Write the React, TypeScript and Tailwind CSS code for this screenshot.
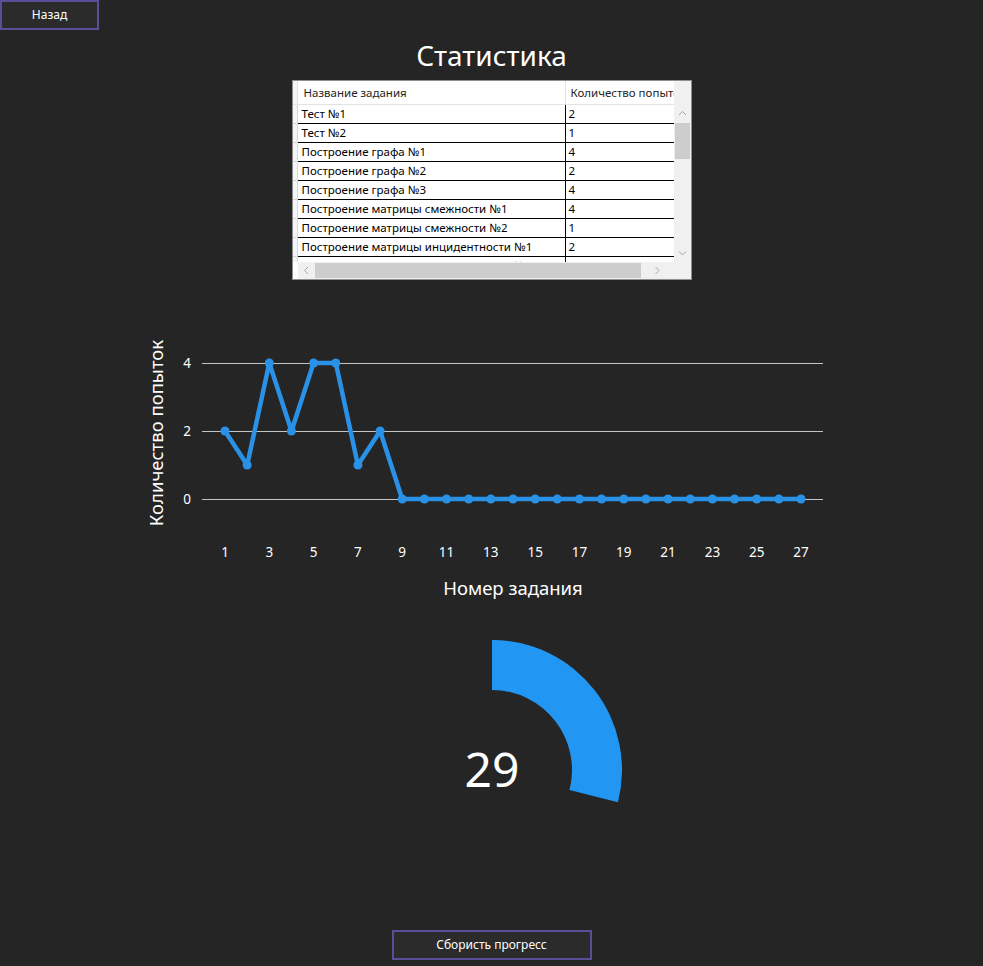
import React from "react";

const ROWS: [string, number][] = [
  ["Тест №1", 2],
  ["Тест №2", 1],
  ["Построение графа №1", 4],
  ["Построение графа №2", 2],
  ["Построение графа №3", 4],
  ["Построение матрицы смежности №1", 4],
  ["Построение матрицы смежности №2", 1],
  ["Построение матрицы инцидентности №1", 2],
  ["Построение матрицы инцидентности №2", 0],
];

const POINTS = [2, 1, 4, 2, 4, 4, 1, 2, ...Array(19).fill(0)];

const FONT = { fontFamily: '"Noto Sans", "Open Sans", sans-serif' };

function Chevron({ dir }: { dir: "up" | "down" | "left" | "right" }) {
  const d = {
    up: "M1 5 L4.5 1.5 L8 5",
    down: "M1 1.5 L4.5 5 L8 1.5",
    left: "M5 1 L1.5 4.5 L5 8",
    right: "M1.5 1 L5 4.5 L1.5 8",
  }[dir];
  const w = dir === "up" || dir === "down" ? 9 : 7;
  const h = dir === "up" || dir === "down" ? 7 : 9;
  return (
    <svg width={w} height={h} viewBox={`0 0 ${w} ${h}`}>
      <path d={d} fill="none" stroke="#a6a6a6" strokeWidth="1" />
    </svg>
  );
}

function StatsTable() {
  return (
    <div className="mt-[8px] flex h-[200px] w-[400px] flex-col border border-[#8f8f94] bg-white text-[11.5px] text-black">
      <div className="flex min-h-0 flex-1">
        <div className="flex min-w-0 flex-1 flex-col overflow-hidden">
          {/* Header */}
          <div className="flex h-[24px] shrink-0 border-b border-[#e3e3e3] bg-white">
            <div className="w-[5px] shrink-0 border-r border-[#e3e3e3] bg-[#f5f5f5]" />
            <div className="flex w-[267px] shrink-0 items-center pl-[6px] text-[11.5px] text-[#1e1e1e]">
              Название задания
            </div>
            <div className="flex flex-1 items-center overflow-hidden whitespace-nowrap border-l border-[#e3e3e3] pl-[5px] text-[11.5px] text-[#1e1e1e]">
              Количество попыток
            </div>
          </div>
          {ROWS.map(([name, n]) => (
            <div key={name} className="flex h-[19px] shrink-0">
              <div className="w-[5px] shrink-0 border-b border-r border-[#d8d8d8] bg-[#f5f5f5]" />
              <div className="flex w-[267px] shrink-0 items-center overflow-hidden whitespace-nowrap border-b border-black pl-[4px]">
                {name}
              </div>
              <div className="flex flex-1 items-center border-b border-l border-black pl-[3px]">{n}</div>
            </div>
          ))}
        </div>
        {/* Vertical scrollbar */}
        <div className="flex w-[17px] shrink-0 flex-col items-center bg-[#f0f0f0]">
          <div className="h-[24px]" />
          <div className="flex h-[17px] items-center justify-center">
            <Chevron dir="up" />
          </div>
          <div className="relative w-full flex-1">
            <div className="absolute left-[1px] right-[1px] top-[1px] h-[36px] bg-[#cdcdcd]" />
          </div>
          <div className="flex h-[17px] items-center justify-center">
            <Chevron dir="down" />
          </div>
        </div>
      </div>
      {/* Horizontal scrollbar */}
      <div className="flex h-[17px] shrink-0">
        <div className="w-[5px] shrink-0 bg-white" />
        <div className="flex flex-1 items-center bg-[#f0f0f0]">
          <div className="flex w-[17px] justify-center">
            <Chevron dir="left" />
          </div>
          <div className="h-[15px] w-[326px] bg-[#cdcdcd]" />
          <div className="flex flex-1 justify-center">
            <Chevron dir="right" />
          </div>
        </div>
        <div className="w-[17px] shrink-0 bg-[#f0f0f0]" />
      </div>
    </div>
  );
}

function LineChart() {
  const top = 300;
  const yOf = (v: number) => 499 - top - v * 34;
  const xOf = (i: number) => 225 + i * 22.154;
  const pts = POINTS.map((v, i) => `${xOf(i).toFixed(1)},${yOf(v)}`).join(" ");
  return (
    <svg width={983} height={320} className="mt-[20px] block shrink-0" style={FONT}>
      {[0, 2, 4].map((v) => (
        <g key={v}>
          <line x1={202} x2={823} y1={yOf(v) + 0.5} y2={yOf(v) + 0.5} stroke="#c4c4c4" strokeWidth={1} />
          <text x={187} y={yOf(v) + 5} fill="#ffffff" fontSize={13.5} textAnchor="middle">
            {v}
          </text>
        </g>
      ))}
      <polyline points={pts} fill="none" stroke="#2a92e6" strokeWidth={4.5} strokeLinejoin="round" />
      {POINTS.map((v, i) => (
        <circle key={i} cx={xOf(i)} cy={yOf(v)} r={4.5} fill="#2a92e6" />
      ))}
      {POINTS.map((_, i) =>
        i % 2 === 0 ? (
          <text key={i} x={xOf(i)} y={257} fill="#ffffff" fontSize={13.5} textAnchor="middle">
            {i + 1}
          </text>
        ) : null
      )}
      <text x={513} y={295} fill="#ffffff" fontSize={18.5} textAnchor="middle">
        Номер задания
      </text>
      <text
        x={0}
        y={0}
        fill="#ffffff"
        fontSize={18.5}
        textAnchor="middle"
        transform="translate(163 133) rotate(-90)"
      >
        Количество попыток
      </text>
    </svg>
  );
}

function Gauge({ value }: { value: number }) {
  const cx = 492;
  const cy = 150;
  const ro = 130;
  const ri = 80;
  const a = ((value / 100) * 360 - 90) * (Math.PI / 180);
  const ox = cx + ro * Math.cos(a);
  const oy = cy + ro * Math.sin(a);
  const ix = cx + ri * Math.cos(a);
  const iy = cy + ri * Math.sin(a);
  const d = `M${cx} ${cy - ro} A${ro} ${ro} 0 0 1 ${ox} ${oy} L${ix} ${iy} A${ri} ${ri} 0 0 0 ${cx} ${cy - ri} Z`;
  return (
    <svg width={983} height={200} className="block shrink-0" style={FONT}>
      <path d={d} fill="#2196f3" />
      <text x={cx} y={cy + 17} fill="#ffffff" fontSize={48} textAnchor="middle">
        {value}
      </text>
    </svg>
  );
}

export default function App() {
  return (
    <div className="flex h-[966px] w-full flex-col items-center bg-[#252526]" style={FONT}>
      <button className="h-[30px] w-[99px] self-start border-2 border-[#5b4d98] bg-[#2b2b2c] text-[12px] text-white">
        Назад
      </button>
      <h1 className="mt-[8px] text-[28px] leading-[34px] text-white">Статистика</h1>
      <StatsTable />
      <LineChart />
      <Gauge value={29} />
      <button className="mb-[6px] mt-auto h-[30px] w-[200px] border-2 border-[#5b4d98] bg-[#2b2b2c] text-[12px] text-white">
        Сбористь прогресс
      </button>
    </div>
  );
}
